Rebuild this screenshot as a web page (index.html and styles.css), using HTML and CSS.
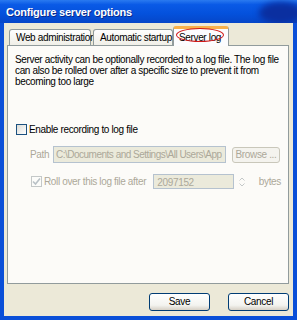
FILE: index.html
```html
<!DOCTYPE html>
<html lang="en">
<head>
    <meta charset="UTF-8">
    <title>Configure server options</title>
    <link rel="stylesheet" href="styles.css">
</head>
<body>
    <div class="window">
        <div class="titlebar">
            <span class="title">Configure server options</span>
            <span class="title-blob"></span>
        </div>
        <div class="content">
            <div class="tabs">
                <div class="tab tab-web">Web administration</div>
                <div class="tab tab-auto">Automatic startup</div>
                <div class="tab tab-active">Server log<span class="mark"></span></div>
            </div>
            <div class="panel">
                <p class="intro">Server activity can be optionally recorded to a log file. The log file can also be rolled over after a specific size to prevent it from becoming too large</p>

                <div class="check-row">
                    <span class="checkbox"></span>
                    <span>Enable recording to log file</span>
                </div>

                <div class="path-row">
                    <span class="muted path-label">Path</span>
                    <div class="textbox path-box">C:\Documents and Settings\All Users\App</div>
                    <div class="btn btn-browse">Browse ...</div>
                </div>

                <div class="roll-row">
                    <span class="checkbox checked">
                        <svg width="9" height="9" viewBox="0 0 9 9"><path d="M1 4.5 L3.5 7 L8 1.5" fill="none" stroke="#b9c1c6" stroke-width="1.6"/></svg>
                    </span>
                    <span class="muted roll-label">Roll over this log file after</span>
                    <div class="textbox size-box">2097152</div>
                    <div class="spinner">
                        <svg width="8" height="12" viewBox="0 0 8 12"><path d="M1.5 4.5 L4 2 L6.5 4.5" fill="none" stroke="#c4c8c8" stroke-width="1"/><path d="M1.5 7.5 L4 10 L6.5 7.5" fill="none" stroke="#c4c8c8" stroke-width="1"/></svg>
                    </div>
                    <span class="muted bytes">bytes</span>
                </div>
            </div>
            <div class="footer">
                <div class="btn btn-main">Save</div>
                <div class="btn btn-main">Cancel</div>
            </div>
        </div>
    </div>
</body>
</html>
```

FILE: styles.css
```css
body {
    margin: 0;
    font-family: 'Liberation Sans', Arial, sans-serif;
    font-size: 10px;
    letter-spacing: -0.35px;
    color: #000;
    background: #fff;
}
.window {
    width: 297px;
    height: 320px;
    box-sizing: border-box;
    display: flex;
    flex-direction: column;
    background: #0a4fd8;
    padding: 0 4px 4px 4px;
}
.titlebar {
    height: 23px;
    margin: 0 -4px;
    padding-left: 6px;
    display: flex;
    align-items: center;
    position: relative;
    background: linear-gradient(180deg, #2a7af0 0%, #0a5ae6 20%, #0451dc 60%, #0646c8 100%);
    overflow: hidden;
}
.title {
    font-family: 'Liberation Sans', Arial, sans-serif;
    font-weight: bold;
    font-size: 11px;
    letter-spacing: -0.2px;
    color: #fff;
    text-shadow: 1px 1px 0 #0a2a8a;
}
.title-blob {
    position: absolute;
    right: -6px;
    top: 2px;
    width: 44px;
    height: 22px;
    border-radius: 50%;
    background: #0a2fa0;
    filter: blur(3px);
}
.content {
    flex: 1;
    background: #ece9d8;
    display: flex;
    flex-direction: column;
    padding: 2px 4px 0 3px;
}
.tabs {
    display: flex;
    align-items: flex-end;
    height: 20px;
    padding-left: 2px;
}
.tab {
    height: 16px;
    box-sizing: border-box;
    border: 1px solid #919b9c;
    border-bottom: none;
    border-radius: 3px 3px 0 0;
    background: linear-gradient(180deg, #fefefe, #f0efe8);
    padding: 2px 0 0 6px;
    margin-right: 2px;
    white-space: nowrap;
}
.tab-web { width: 82px; }
.tab-auto { width: 80px; }
.tab-active {
    width: 56px;
    height: 20px;
    margin-left: -2px;
    margin-right: 0;
    position: relative;
    padding: 3px 0 0 5px;
    background: #fcfcfe;
    border-top: 3px solid #f7b04a;
    margin-bottom: -1px;
    z-index: 2;
}
.mark {
    position: absolute;
    left: 2px;
    top: -1px;
    width: 48px;
    height: 14px;
    box-sizing: border-box;
    border: 1px solid #d01818;
    border-radius: 50%;
}
.panel {
    height: 239px;
    box-sizing: border-box;
    border: 1px solid #919b9c;
    background: #fcfbf8;
    padding: 8px 7px 0 7px;
    position: relative;
    z-index: 1;
}
.intro {
    margin: 0;
    line-height: 11px;
}
.check-row {
    display: flex;
    align-items: center;
    gap: 2px;
    margin-top: 37px;
    margin-left: 1px;
}
.checkbox {
    width: 11px;
    height: 11px;
    box-sizing: border-box;
    border: 1px solid #1c5180;
    background: linear-gradient(135deg, #dcdcd7, #fff);
    display: flex;
    align-items: center;
    justify-content: center;
}
.checkbox.checked {
    border-color: #c4c8c8;
    background: #fcfcfa;
}
.muted {
    color: #aca899;
}
.path-row {
    display: flex;
    align-items: center;
    margin-top: 11px;
    margin-left: 15px;
}
.path-label {
    width: 23px;
}
.textbox {
    box-sizing: border-box;
    border: 1px solid #b5c2cf;
    background: #ebeadb;
    color: #aca899;
    white-space: nowrap;
    overflow: hidden;
    padding-left: 3px;
}
.path-box {
    width: 173px;
    height: 17px;
    line-height: 15px;
    padding-left: 2px;
    letter-spacing: -0.5px;
}
.btn {
    box-sizing: border-box;
    border: 1px solid #003c74;
    border-radius: 3px;
    background: linear-gradient(180deg, #fff, #f3f3ef 70%, #d6d0c5);
    text-align: center;
    white-space: nowrap;
}
.btn-browse {
    width: 48px;
    height: 16px;
    line-height: 14px;
    margin-left: 6px;
    border-color: #c9c7ba;
    color: #aca899;
    background: #f4f3ee;
}
.roll-row {
    display: flex;
    align-items: center;
    margin-top: 11px;
    margin-left: 16px;
}
.roll-label {
    margin-left: 2px;
    width: 110px;
    white-space: nowrap;
}
.size-box {
    width: 81px;
    height: 15px;
    line-height: 14px;
    padding-top: 1px;
}
.spinner {
    width: 10px;
    height: 14px;
    margin-left: 3px;
    display: flex;
    align-items: center;
    justify-content: center;
}
.bytes {
    margin-left: 12px;
}
.footer {
    flex: 1;
    display: flex;
    justify-content: flex-end;
    align-items: center;
    gap: 18px;
    padding-top: 3px;
}
.btn-main {
    width: 61px;
    height: 18px;
    line-height: 16px;
}
```
